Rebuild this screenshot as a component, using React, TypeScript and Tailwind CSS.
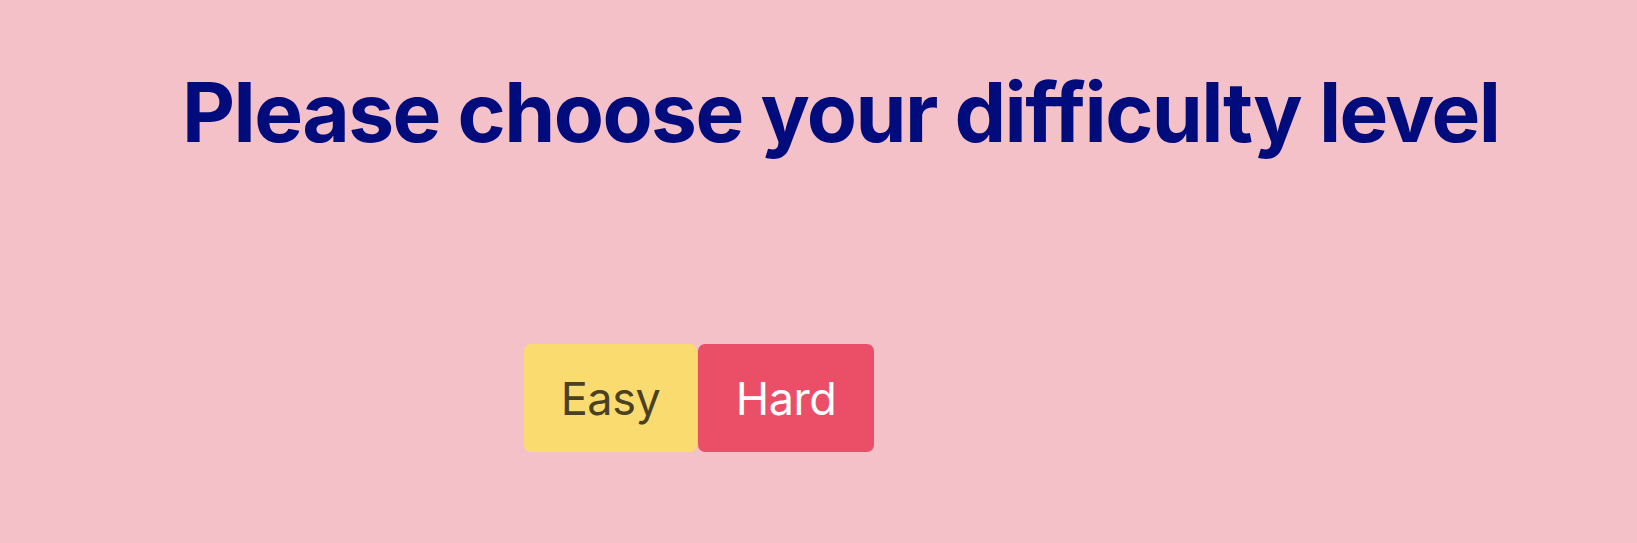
export default function App() {
  return (
    <div className="min-h-[543px] w-full bg-[#f5c1c9] font-['Inter',sans-serif]">
      <h1 className="pt-[64px] pl-[182px] text-[82px] font-bold leading-[1.2] tracking-[-1.6px] whitespace-nowrap text-[#000c7b]">
        Please choose your difficulty level
      </h1>
      <div className="mt-[182px] flex gap-px pl-[524px]">
        <button className="flex h-[108px] w-[173px] items-center justify-center rounded-[7px] bg-[#fadb6f] text-[45px] tracking-[-0.5px] text-[#4a4123]">
          Easy
        </button>
        <button className="flex h-[108px] w-[176px] items-center justify-center rounded-[7px] bg-[#eb4e67] text-[45px] tracking-[-0.5px] text-white">
          Hard
        </button>
      </div>
    </div>
  );
}
